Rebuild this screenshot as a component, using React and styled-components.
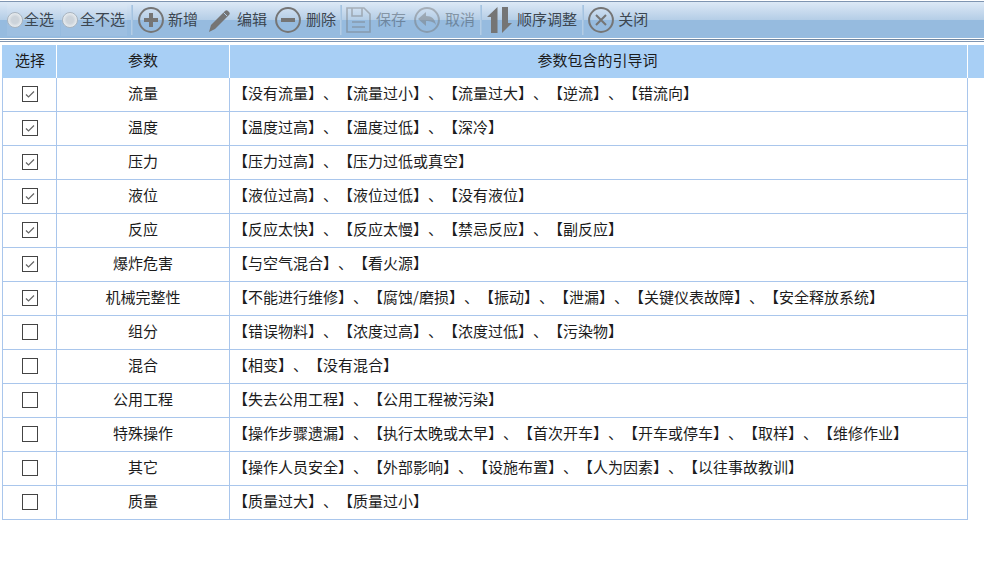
import React from "react";
import styled, { createGlobalStyle } from "styled-components";

const GlobalStyle = createGlobalStyle`
  html, body {
    margin: 0;
    padding: 0;
    background: #fff;
    font-family: "Noto Sans CJK SC", "Liberation Sans", sans-serif;
    font-size: 15px;
    color: #1c1c1c;
    text-spacing-trim: space-all;
    font-kerning: none;
  }
`;

const Toolbar = styled.div`
  height: 36px;
  border-top: 1px solid #7f95b1;
  margin-top: 1px;
  display: flex;
  align-items: center;
  background: linear-gradient(to bottom, #dde9f6 0, #b4cde6 18px, #96bbdf 18px, #96bbdf 100%);
  color: #3c4650;
`;

const Rule = styled.div`
  height: 5px;
  background: linear-gradient(to bottom, #fff 0 1px, #6f87a3 1px 2px, #fff 2px 3px, #7f95b1 3px 4px, #fff 4px 5px);
`;

const ToolItem = styled.div`
  display: flex;
  align-items: center;
  gap: ${(p) => p.$gap ?? 4}px;
  margin-left: ${(p) => p.$ml ?? 0}px;
  height: 32px;
  white-space: nowrap;
  opacity: ${(p) => (p.$off ? 0.45 : 1)};
`;

const RadioItem = styled(ToolItem)`
  background: rgba(255, 255, 255, 0.07);
  padding: 0 ${(p) => p.$pr ?? 0}px 0 ${(p) => p.$pl ?? 0}px;
`;

const ToolText = styled.span`
  padding-bottom: 3px;
`;

const Sep = styled.div`
  width: 1px;
  height: 30px;
  margin-left: ${(p) => p.$ml ?? 4}px;
  background: #b3cde6;
  box-shadow: 1px 0 0 #a5c3e0;
`;

const Radio = styled.span`
  width: 16px;
  height: 16px;
  border-radius: 50%;
  border: 1px solid #a9b4bf;
  box-sizing: border-box;
  background: radial-gradient(circle, #ccd3da 0 35%, #f0f3f5 80%);
`;

const Table = styled.div`
  margin-left: 2px;
  width: 966px;
  margin-top: 1px;
`;

const HeadRow = styled.div`
  display: flex;
  height: 34px;
  width: 982px;
  background: #a8cff5;
  border-top: 1px solid #fff;
  box-sizing: border-box;
`;

const HeadCell = styled.div`
  width: ${(p) => p.$w}px;
  box-sizing: border-box;
  display: flex;
  align-items: center;
  justify-content: center;
  padding-bottom: 5px;
  padding-left: ${(p) => p.$pl ?? 0}px;
  padding-right: ${(p) => p.$pr ?? 0}px;
  border-right: ${(p) => (p.$last ? "0" : "1px solid #fff")};
`;

const Row = styled.div`
  display: flex;
  height: 34px;
  box-sizing: border-box;
  border-bottom: 1px solid #a9c6ec;
  border-left: 1px solid #a9c6ec;
`;

const Cell = styled.div`
  width: ${(p) => p.$w}px;
  box-sizing: border-box;
  display: flex;
  align-items: center;
  justify-content: ${(p) => (p.$left ? "flex-start" : "center")};
  padding-left: ${(p) => (p.$left ? "3px" : "0")};
  padding-bottom: ${(p) => (p.$box ? 2 : 5)}px;
  border-right: 1px solid #a9c6ec;
  white-space: pre;
`;

const Box = styled.span`
  width: 16px;
  height: 16px;
  box-sizing: border-box;
  border: 1px solid #444;
  background: #fff;
  display: flex;
  align-items: center;
  justify-content: center;
`;

const iconColor = "#757575";

const PlusIcon = () => (
  <svg width="26" height="26" viewBox="0 0 26 26">
    <circle cx="13" cy="13" r="11.9" fill="none" stroke={iconColor} strokeWidth="2" />
    <path d="M13 6v14M6 13h14" stroke={iconColor} strokeWidth="4" />
  </svg>
);

const PenIcon = () => (
  <svg width="24" height="26" viewBox="0 0 24 26">
    <path d="M1 25l2-7L17 4c1-1 2-1 3 0l1 1c1 1 1 2 0 3L7 22z" fill={iconColor} />
    <path d="M15.5 5.5l3.5 3.5" stroke="#b4cde6" strokeWidth="1" />
  </svg>
);

const MinusIcon = () => (
  <svg width="26" height="26" viewBox="0 0 26 26">
    <circle cx="13" cy="13" r="11.9" fill="none" stroke={iconColor} strokeWidth="2" />
    <path d="M6 13h14" stroke={iconColor} strokeWidth="4" />
  </svg>
);

const SaveIcon = () => (
  <svg width="25" height="26" viewBox="0 0 25 26">
    <path d="M1 1h17l6 6v18H1z" fill="none" stroke={iconColor} strokeWidth="1.6" />
    <path d="M6 1v8h10V1M6 15h13M6 20h13" fill="none" stroke={iconColor} strokeWidth="1.6" />
  </svg>
);

const BackIcon = () => (
  <svg width="26" height="26" viewBox="0 0 26 26">
    <circle cx="13" cy="13" r="11.9" fill="none" stroke={iconColor} strokeWidth="2" />
    <path d="M4 12l8-7v4c6 0 9 3 10 9-2-3-5-4-10-4v5z" fill={iconColor} />
  </svg>
);

const SortIcon = () => (
  <svg width="25" height="26" viewBox="0 0 25 26">
    <path d="M10.5 0v26H4V10H0zM15 0h6v16h4L15 26z" fill={iconColor} />
  </svg>
);

const CloseIcon = () => (
  <svg width="26" height="26" viewBox="0 0 26 26">
    <circle cx="13" cy="13" r="11.9" fill="none" stroke={iconColor} strokeWidth="2" />
    <path d="M8 8l10 10M18 8L8 18" stroke={iconColor} strokeWidth="2" />
  </svg>
);

const rows = [
  ["流量", "【没有流量】、【流量过小】、【流量过大】、【逆流】、【错流向】", true],
  ["温度", "【温度过高】、【温度过低】、【深冷】", true],
  ["压力", "【压力过高】、【压力过低或真空】", true],
  ["液位", "【液位过高】、【液位过低】、【没有液位】", true],
  ["反应", "【反应太快】、【反应太慢】、【禁忌反应】、【副反应】", true],
  ["爆炸危害", "【与空气混合】、【看火源】", true],
  ["机械完整性", "【不能进行维修】、【腐蚀/磨损】、【振动】、【泄漏】、【关键仪表故障】、【安全释放系统】", true],
  ["组分", "【错误物料】、【浓度过高】、【浓度过低】、【污染物】", false],
  ["混合", "【相变】、【没有混合】", false],
  ["公用工程", "【失去公用工程】、【公用工程被污染】", false],
  ["特殊操作", "【操作步骤遗漏】、【执行太晚或太早】、【首次开车】、【开车或停车】、【取样】、【维修作业】", false],
  ["其它", "【操作人员安全】、【外部影响】、【设施布置】、【人为因素】、【以往事故教训】", false],
  ["质量", "【质量过大】、【质量过小】", false],
];

const App = () => (
  <>
    <GlobalStyle />
    <Toolbar>
      <RadioItem $gap={1} $ml={7} $pr={6}><Radio /><ToolText>全选</ToolText></RadioItem>
      <RadioItem $gap={2} $ml={1} $pl={1} $pr={2}><Radio /><ToolText>全不选</ToolText></RadioItem>
      <Sep $ml={4} />
      <ToolItem $ml={6}><PlusIcon /><ToolText>新增</ToolText></ToolItem>
      <ToolItem $gap={5} $ml={10}><PenIcon /><ToolText>编辑</ToolText></ToolItem>
      <ToolItem $gap={5} $ml={8}><MinusIcon /><ToolText>删除</ToolText></ToolItem>
      <Sep />
      <ToolItem $gap={5} $ml={5} $off><SaveIcon /><ToolText>保存</ToolText></ToolItem>
      <ToolItem $gap={5} $ml={8} $off><BackIcon /><ToolText>取消</ToolText></ToolItem>
      <Sep $ml={5} />
      <ToolItem $gap={5} $ml={6}><SortIcon /><ToolText>顺序调整</ToolText></ToolItem>
      <Sep $ml={5} />
      <ToolItem $ml={5}><CloseIcon /><ToolText>关闭</ToolText></ToolItem>
    </Toolbar>
    <Rule />
    <Table>
      <HeadRow>
        <HeadCell $w={55} $pl={2}>选择</HeadCell>
        <HeadCell $w={173}>参数</HeadCell>
        <HeadCell $w={738} $pr={2}>参数包含的引导词</HeadCell>
        <HeadCell $w={16} $last />
      </HeadRow>
      {rows.map(([name, words, on]) => (
        <Row key={name}>
          <Cell $w={54} $box>
            <Box>
              {on && (
                <svg width="12" height="12" viewBox="0 0 12 12">
                  <path d="M2 6.5l2.5 2.5 5.5-5.5" fill="none" stroke="#666" strokeWidth="1.2" />
                </svg>
              )}
            </Box>
          </Cell>
          <Cell $w={173}>{name}</Cell>
          <Cell $w={738} $left>{words}</Cell>
        </Row>
      ))}
    </Table>
  </>
);

export default App;
